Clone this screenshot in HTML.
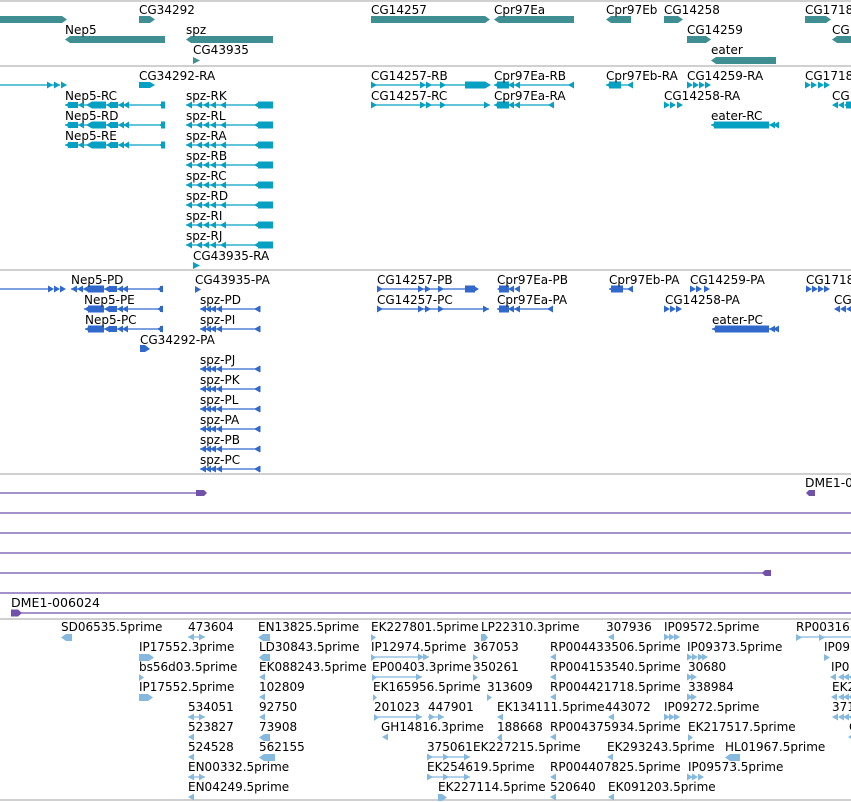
<!DOCTYPE html>
<html><head><meta charset="utf-8"><style>
html,body{margin:0;padding:0;background:#fff;width:851px;height:802px;overflow:hidden}
svg{display:block}
text{font-family:"DejaVu Sans","Liberation Sans",sans-serif;font-size:12px;fill:#000}
.d{font-family:"DejaVu Sans Condensed","DejaVu Sans",sans-serif;font-size:12px}
</style></head><body>
<svg width="851" height="802" viewBox="0 0 851 802" xmlns="http://www.w3.org/2000/svg">
<defs>
<path id="L" d="M0 0l6-3.5v7z"/>
<path id="R" d="M0 0l-6-3.5v7z"/>
</defs>
<g stroke="#c0c0c0" stroke-width="1.5">
<line x1="0" y1="1" x2="851" y2="1"/><line x1="0" y1="66" x2="851" y2="66"/>
<line x1="0" y1="270" x2="851" y2="270"/><line x1="0" y1="474" x2="851" y2="474"/>
<line x1="0" y1="619" x2="851" y2="619"/><line x1="0" y1="800" x2="851" y2="800"/>
</g>

<!-- GENES -->
<g fill="#3f8f92">
<path d="M0 16H62L67 19.5L62 23H0z"/>
<path d="M139 16H150L155 19.5L150 23H139z"/>
<path d="M165 36H70L65 39.5L70 43H165z"/>
<path d="M273 36H191L186 39.5L191 43H273z"/>
<path d="M193 57L200 60.5L193 64z"/>
<path d="M371 16H485L490 19.5L485 23H371z"/>
<path d="M574 16H499L494 19.5L499 23H574z"/>
<path d="M631 16H611L606 19.5L611 23H631z"/>
<path d="M664 16H678L683 19.5L678 23H664z"/>
<path d="M687 36H706L711 39.5L706 43H687z"/>
<path d="M776 57H716L711 60.5L716 64H776z"/>
<path d="M805 16H826L831 19.5L826 23H805z"/>
<path d="M851 36H837L832 39.5L837 43H851z"/>
</g>
<text x="139" y="14">CG34292</text><text x="65" y="34">Nep5</text><text x="186" y="34">spz</text>
<text x="193" y="54">CG43935</text><text x="371" y="14">CG14257</text><text x="494" y="14">Cpr97Ea</text>
<text x="606" y="14">Cpr97Eb</text><text x="664" y="14">CG14258</text><text x="687" y="34">CG14259</text>
<text x="711" y="54">eater</text><text x="805" y="14">CG1718</text><text x="832" y="34">CG</text>

<!-- TRANSCRIPTS -->
<g fill="#05a0c2" stroke="#05a0c2">
<g stroke-width="1.3">
<line x1="0" y1="85" x2="60" y2="85"/>
<line x1="65" y1="105" x2="165" y2="105"/><line x1="65" y1="125" x2="165" y2="125"/><line x1="65" y1="145" x2="165" y2="145"/>
<line x1="186" y1="105" x2="273" y2="105"/><line x1="186" y1="125" x2="273" y2="125"/><line x1="186" y1="145" x2="273" y2="145"/>
<line x1="186" y1="165" x2="273" y2="165"/><line x1="186" y1="185" x2="273" y2="185"/><line x1="186" y1="205" x2="273" y2="205"/>
<line x1="186" y1="225" x2="273" y2="225"/><line x1="186" y1="245" x2="273" y2="245"/>
<line x1="371" y1="85" x2="490" y2="85"/><line x1="371" y1="105" x2="490" y2="105"/>
<line x1="494" y1="85" x2="574" y2="85"/><line x1="494" y1="105" x2="554" y2="105"/>
<line x1="606" y1="85" x2="633" y2="85"/><line x1="711" y1="125" x2="777" y2="125"/>
</g>
<g stroke="none">
<use href="#R" x="53" y="85"/><use href="#R" x="60" y="85"/><use href="#R" x="67" y="85"/>
<path d="M139 82H150L155 85L150 88H139z"/>
</g>
<g stroke="none" id="nep">
<use href="#L" x="65" y="105"/><rect x="68" y="102" width="10" height="6"/><use href="#L" x="78" y="105"/><use href="#L" x="86" y="105"/>
<rect x="92" y="101.5" width="14" height="7"/><use href="#L" x="106" y="105"/><rect x="110" y="102" width="8" height="6"/><use href="#L" x="118" y="105"/><use href="#L" x="123" y="105"/>
<use href="#L" x="159" y="105"/><rect x="161" y="101.5" width="4" height="7"/>
</g>
<use href="#nep" y="20" stroke="none"/><use href="#nep" y="40" stroke="none"/>
<g stroke="none" id="spz">
<use href="#L" x="186" y="105"/><use href="#L" x="196" y="105"/><use href="#L" x="203" y="105"/><use href="#L" x="210" y="105"/><use href="#L" x="220" y="105"/>
<use href="#L" x="254" y="105"/><rect x="258" y="101.5" width="15" height="7"/>
</g>
<use href="#spz" y="20" stroke="none"/><use href="#spz" y="40" stroke="none"/><use href="#spz" y="60" stroke="none"/>
<use href="#spz" y="80" stroke="none"/><use href="#spz" y="100" stroke="none"/><use href="#spz" y="120" stroke="none"/><use href="#spz" y="140" stroke="none"/>
<path stroke="none" d="M193 262L200 265.5L193 269z"/>
<g stroke="none">
<use href="#R" x="377" y="85"/><use href="#R" x="426" y="85"/><use href="#R" x="432" y="85"/><use href="#R" x="446" y="85"/>
<rect x="465" y="81.5" width="20" height="7"/><use href="#R" x="491" y="85"/>
<use href="#R" x="377" y="105"/><use href="#R" x="426" y="105"/><use href="#R" x="432" y="105"/><use href="#R" x="446" y="105"/><use href="#R" x="490" y="105"/>
<rect x="497" y="81.5" width="12" height="7"/><use href="#L" x="494" y="85"/><use href="#L" x="508" y="85"/><use href="#L" x="514" y="85"/><use href="#L" x="568" y="85"/>
<rect x="497" y="101.5" width="12" height="7"/><use href="#L" x="494" y="105"/><use href="#L" x="508" y="105"/><use href="#L" x="514" y="105"/><use href="#L" x="548" y="105"/>
<rect x="609" y="81.5" width="12" height="7"/><use href="#L" x="606" y="85"/><use href="#L" x="627" y="85"/>
<use href="#R" x="693" y="85"/><use href="#R" x="699" y="85"/><use href="#R" x="705" y="85"/><use href="#R" x="711" y="85"/>
<use href="#R" x="670" y="105"/><use href="#R" x="676" y="105"/><use href="#R" x="683" y="105"/>
<rect x="714" y="121.5" width="55" height="7"/><use href="#L" x="711" y="125"/><use href="#L" x="769" y="125"/><use href="#L" x="773" y="125"/>
<use href="#R" x="811" y="85"/><use href="#R" x="817" y="85"/><use href="#R" x="824" y="85"/><use href="#R" x="830" y="85"/>
<use href="#L" x="832" y="105"/><use href="#L" x="838" y="105"/><use href="#L" x="844" y="105"/><rect x="846" y="101.5" width="5" height="7"/>
</g>
</g>
<text x="139" y="80">CG34292-RA</text><text x="65" y="100">Nep5-RC</text><text x="65" y="120">Nep5-RD</text><text x="65" y="140">Nep5-RE</text>
<text x="186" y="100">spz-RK</text><text x="186" y="120">spz-RL</text><text x="186" y="140">spz-RA</text><text x="186" y="160">spz-RB</text>
<text x="186" y="180">spz-RC</text><text x="186" y="200">spz-RD</text><text x="186" y="220">spz-RI</text><text x="186" y="240">spz-RJ</text>
<text x="193" y="260">CG43935-RA</text>
<text x="371" y="80">CG14257-RB</text><text x="371" y="100">CG14257-RC</text><text x="494" y="80">Cpr97Ea-RB</text><text x="494" y="100">Cpr97Ea-RA</text>
<text x="606" y="80">Cpr97Eb-RA</text><text x="687" y="80">CG14259-RA</text><text x="664" y="100">CG14258-RA</text><text x="711" y="120">eater-RC</text>
<text x="805" y="80">CG1718</text><text x="832" y="100">CG</text>

<!-- PROTEINS -->
<g fill="#3068cc" stroke="#3068cc">
<g stroke-width="1.3">
<line x1="0" y1="289" x2="48" y2="289"/>
<line x1="71" y1="289" x2="162" y2="289"/><line x1="84" y1="309" x2="162" y2="309"/><line x1="85" y1="329" x2="162" y2="329"/>
<line x1="200" y1="309" x2="260" y2="309"/><line x1="200" y1="329" x2="260" y2="329"/><line x1="200" y1="369" x2="260" y2="369"/>
<line x1="200" y1="389" x2="260" y2="389"/><line x1="200" y1="409" x2="260" y2="409"/><line x1="200" y1="429" x2="260" y2="429"/>
<line x1="200" y1="449" x2="260" y2="449"/><line x1="200" y1="469" x2="260" y2="469"/>
<line x1="377" y1="289" x2="470" y2="289"/><line x1="377" y1="309" x2="489" y2="309"/>
<line x1="497" y1="309" x2="553" y2="309"/><line x1="609" y1="289" x2="633" y2="289"/><line x1="712" y1="329" x2="777" y2="329"/>
</g>
<g stroke="none">
<use href="#R" x="54" y="289"/><use href="#R" x="60" y="289"/><use href="#R" x="66" y="289"/>
<use href="#L" x="71" y="289"/><use href="#L" x="77" y="289"/><use href="#L" x="83" y="289"/><rect x="88" y="285.5" width="16" height="7"/><use href="#L" x="104" y="289"/><rect x="109" y="286" width="8" height="6"/><use href="#L" x="117" y="289"/><use href="#L" x="122" y="289"/><use href="#L" x="157" y="289"/><rect x="160" y="286" width="2" height="6"/>
<use href="#L" x="84" y="309"/><rect x="88" y="305.5" width="16" height="7"/><use href="#L" x="104" y="309"/><rect x="109" y="306" width="8" height="6"/><use href="#L" x="117" y="309"/><use href="#L" x="122" y="309"/><use href="#L" x="157" y="309"/><rect x="160" y="306" width="2" height="6"/>
<use href="#L" x="85" y="329"/><rect x="88" y="325.5" width="16" height="7"/><use href="#L" x="104" y="329"/><rect x="109" y="326" width="8" height="6"/><use href="#L" x="117" y="329"/><use href="#L" x="122" y="329"/><use href="#L" x="157" y="329"/><rect x="160" y="326" width="2" height="6"/>
<path d="M195 286L201 289.5L195 293z"/>
<path d="M140 345H145L150 349L145 352H140z"/>
</g>
<g stroke="none" id="pp">
<use href="#L" x="200" y="309"/><use href="#L" x="205" y="309"/><use href="#L" x="210" y="309"/><use href="#L" x="216" y="309"/><use href="#L" x="254" y="309"/><rect x="259" y="306" width="1.5" height="6"/>
</g>
<use href="#pp" y="20" stroke="none"/><use href="#pp" y="60" stroke="none"/><use href="#pp" y="80" stroke="none"/><use href="#pp" y="100" stroke="none"/>
<use href="#pp" y="120" stroke="none"/><use href="#pp" y="140" stroke="none"/><use href="#pp" y="160" stroke="none"/>
<g stroke="none">
<use href="#R" x="383" y="289"/><use href="#R" x="424" y="289"/><use href="#R" x="431" y="289"/><use href="#R" x="444" y="289"/>
<rect x="465" y="285.5" width="10" height="7"/><use href="#R" x="479" y="289"/>
<use href="#R" x="383" y="309"/><use href="#R" x="424" y="309"/><use href="#R" x="431" y="309"/><use href="#R" x="444" y="309"/><use href="#R" x="489" y="309"/>
<rect x="499" y="285.5" width="10" height="7"/><use href="#L" x="497" y="289"/><use href="#L" x="508" y="289"/><use href="#L" x="514" y="289"/>
<rect x="499" y="305.5" width="10" height="7"/><use href="#L" x="497" y="309"/><use href="#L" x="508" y="309"/><use href="#L" x="514" y="309"/><use href="#L" x="547" y="309"/>
<rect x="611" y="285.5" width="12" height="7"/><use href="#L" x="609" y="289"/><use href="#L" x="627" y="289"/>
<use href="#R" x="696" y="289"/><use href="#R" x="702" y="289"/><use href="#R" x="710" y="289"/>
<use href="#R" x="670" y="309"/><use href="#R" x="676" y="309"/><use href="#R" x="682" y="309"/>
<rect x="715" y="325.5" width="54" height="7"/><use href="#L" x="712" y="329"/><use href="#L" x="769" y="329"/><use href="#L" x="773" y="329"/>
<use href="#R" x="812" y="289"/><use href="#R" x="818" y="289"/><use href="#R" x="824" y="289"/><use href="#R" x="830" y="289"/>
<use href="#L" x="834" y="309"/><use href="#L" x="840" y="309"/><use href="#L" x="846" y="309"/>
</g>
</g>
<text x="71" y="284">Nep5-PD</text><text x="84" y="304">Nep5-PE</text><text x="85" y="324">Nep5-PC</text><text x="140" y="344">CG34292-PA</text>
<text x="195" y="284">CG43935-PA</text><text x="200" y="304">spz-PD</text><text x="200" y="324">spz-PI</text>
<text x="200" y="364">spz-PJ</text><text x="200" y="384">spz-PK</text><text x="200" y="404">spz-PL</text><text x="200" y="424">spz-PA</text>
<text x="200" y="444">spz-PB</text><text x="200" y="464">spz-PC</text>
<text x="377" y="284">CG14257-PB</text><text x="377" y="304">CG14257-PC</text><text x="497" y="284">Cpr97Ea-PB</text><text x="497" y="304">Cpr97Ea-PA</text>
<text x="609" y="284">Cpr97Eb-PA</text><text x="690" y="284">CG14259-PA</text><text x="665" y="304">CG14258-PA</text><text x="712" y="324">eater-PC</text>
<text x="806" y="284">CG1718</text><text x="834" y="304">CG</text>

<!-- DME -->
<g fill="#7052aa" stroke="#7052aa" stroke-width="1.3">
<line x1="0" y1="493" x2="200" y2="493"/><path stroke="none" d="M196 490H204L207 493L204 496H196z"/>
<path stroke="none" d="M815 490H809L806 493L809 496H815z"/>
<line x1="0" y1="513" x2="851" y2="513"/><line x1="0" y1="533" x2="851" y2="533"/><line x1="0" y1="553" x2="851" y2="553"/>
<line x1="0" y1="573" x2="765" y2="573"/><path stroke="none" d="M771 570H765L762 573L765 576H771z"/>
<line x1="0" y1="593" x2="851" y2="593"/>
<line x1="15" y1="613" x2="851" y2="613"/><path stroke="none" d="M11 609.5H18L22 613L18 616.5H11z"/>
</g>
<text class="d" x="805" y="487" textLength="48" lengthAdjust="spacingAndGlyphs">DME1-0</text><text class="d" x="11" y="607" textLength="89" lengthAdjust="spacingAndGlyphs">DME1-006024</text>

<!-- ESTs -->
<g fill="#86b9de" stroke="#86b9de" stroke-width="1.3">
<g stroke="none">
<path d="M72 634H66L61 637.5L66 641H72z"/>
<path d="M270 634H263L258 637.5L263 641H270z"/>
<path d="M371 634V641L376 637.5z"/><path d="M481 634H485L488 637.5L485 641H481z"/>
<use href="#L" x="608" y="637"/>
<use href="#R" x="670" y="637"/><use href="#R" x="675" y="637"/><use href="#R" x="680" y="637"/>
<path d="M139 654H149L154 657.5L149 661H139z"/>
<path d="M270 654H263L259 657.5L263 661H270z"/>
<path d="M473 654V661L478 657.5z"/><use href="#L" x="550" y="657"/>
<use href="#R" x="693" y="657"/><use href="#R" x="698" y="657"/><use href="#R" x="704" y="657"/><use href="#R" x="708" y="657"/>
<path d="M824 654V661L830 657.5z"/>
<path d="M139 674V681L144 677.5z"/><use href="#L" x="259" y="677"/>
<path d="M473 674V681L478 677.5z"/><use href="#L" x="550" y="677"/>
<use href="#R" x="693" y="677"/><use href="#R" x="697" y="677"/>
<use href="#L" x="830" y="677"/><use href="#L" x="838" y="677"/><use href="#L" x="843" y="677"/><use href="#L" x="848" y="677"/>
<path d="M139 694H148L153 697.5L148 701H139z"/><use href="#L" x="259" y="697"/>
<path d="M373 694V701L377 697.5z"/><path d="M487 694V701L492 697.5z"/><use href="#L" x="550" y="697"/>
<use href="#R" x="693" y="697"/><use href="#R" x="697" y="697"/>
<use href="#L" x="831" y="697"/><use href="#L" x="838" y="697"/><use href="#L" x="843" y="697"/><use href="#L" x="848" y="697"/>
<use href="#L" x="259" y="717"/><use href="#L" x="497" y="717"/><use href="#L" x="608" y="717"/>
<use href="#R" x="670" y="717"/><use href="#R" x="675" y="717"/><use href="#R" x="680" y="717"/>
<use href="#L" x="832" y="717"/><use href="#L" x="838" y="717"/><use href="#L" x="843" y="717"/><use href="#L" x="848" y="717"/>
<use href="#L" x="188" y="737"/><path d="M270 734H264L259 737.5L264 741H270z"/><use href="#L" x="382" y="737"/>
<path d="M502 734H501L497 737.5L501 741H502z"/><use href="#L" x="550" y="737"/><path d="M688 734V741L693 737.5z"/>
<use href="#L" x="848" y="737"/>
<use href="#L" x="188" y="757"/><path d="M275 754H264L259 757.5L264 761H275z"/><use href="#L" x="607" y="757"/>
<path d="M740 754H730L725 757.5L730 761H740z"/>
<use href="#L" x="550" y="777"/>
<use href="#R" x="693" y="777"/><use href="#R" x="698" y="777"/><use href="#R" x="704" y="777"/>
<use href="#L" x="188" y="797"/><path d="M438 794H442L447 797.5L442 801H438z"/><use href="#L" x="550" y="797"/><use href="#L" x="608" y="797"/>
</g>
<line x1="188" y1="637" x2="205" y2="637"/><use href="#L" x="188" y="637" stroke="none"/><use href="#R" x="205" y="637" stroke="none"/>
<line x1="796" y1="637" x2="851" y2="637"/><path stroke="none" d="M796 634V641L802 637.5z"/><path stroke="none" d="M819 634V641L825 637.5z"/>
<line x1="371" y1="657" x2="429" y2="657"/><path stroke="none" d="M371 654V661L376 657.5z"/><use href="#R" x="424" y="657" stroke="none"/><use href="#R" x="429" y="657" stroke="none"/>
<line x1="372" y1="677" x2="422" y2="677"/><path stroke="none" d="M372 674V681L377 677.5z"/><use href="#R" x="422" y="677" stroke="none"/>
<line x1="188" y1="717" x2="205" y2="717"/><use href="#L" x="188" y="717" stroke="none"/><use href="#R" x="205" y="717" stroke="none"/>
<line x1="374" y1="717" x2="422" y2="717"/><path stroke="none" d="M374 714V721L379 717.5z"/><use href="#R" x="422" y="717" stroke="none"/>
<line x1="428" y1="717" x2="444" y2="717"/><use href="#R" x="435" y="717" stroke="none"/><use href="#R" x="444" y="717" stroke="none"/>
<line x1="427" y1="757" x2="470" y2="757"/><use href="#R" x="433" y="757" stroke="none"/><use href="#R" x="449" y="757" stroke="none"/><use href="#R" x="470" y="757" stroke="none"/>
<line x1="188" y1="777" x2="205" y2="777"/><use href="#L" x="188" y="777" stroke="none"/><use href="#R" x="205" y="777" stroke="none"/>
<line x1="427" y1="777" x2="470" y2="777"/><use href="#R" x="433" y="777" stroke="none"/><use href="#R" x="449" y="777" stroke="none"/><use href="#R" x="470" y="777" stroke="none"/>
</g>
<text x="61" y="631">SD06535.5prime</text><text x="188" y="631">473604</text><text x="258" y="631">EN13825.5prime</text>
<text x="371" y="631">EK227801.5prime</text><text x="481" y="631">LP22310.3prime</text><text x="606" y="631">307936</text>
<text x="664" y="631">IP09572.5prime</text><text x="796" y="631">RP00316</text>
<text x="139" y="651">IP17552.3prime</text><text x="259" y="651">LD30843.5prime</text><text x="371" y="651">IP12974.5prime</text>
<text x="473" y="651">367053</text><text x="550" y="651">RP004433506.5prime</text><text x="687" y="651">IP09373.5prime</text><text x="824" y="651">IP09</text>
<text x="139" y="671">bs56d03.5prime</text><text x="259" y="671">EK088243.5prime</text><text x="372" y="671">EP00403.3prime</text>
<text x="473" y="671">350261</text><text x="550" y="671">RP004153540.5prime</text><text x="688" y="671">30680</text><text x="831" y="671">IP0</text>
<text x="139" y="691">IP17552.5prime</text><text x="259" y="691">102809</text><text x="373" y="691">EK165956.5prime</text>
<text x="487" y="691">313609</text><text x="550" y="691">RP004421718.5prime</text><text x="688" y="691">338984</text><text x="832" y="691">EK2</text>
<text x="188" y="711">534051</text><text x="259" y="711">92750</text><text x="374" y="711">201023</text><text x="428" y="711">447901</text>
<text x="497" y="711">EK134111.5prime</text><text x="605" y="711">443072</text><text x="664" y="711">IP09272.5prime</text><text x="832" y="711">371</text>
<text x="188" y="731">523827</text><text x="259" y="731">73908</text><text x="381" y="731">GH14816.3prime</text><text x="497" y="731">188668</text>
<text x="550" y="731">RP004375934.5prime</text><text x="688" y="731">EK217517.5prime</text><text x="849" y="731">C</text>
<text x="188" y="751">524528</text><text x="259" y="751">562155</text><text x="427" y="751">375061</text><text x="473" y="751">EK227215.5prime</text>
<text x="607" y="751">EK293243.5prime</text><text x="725" y="751">HL01967.5prime</text>
<text x="188" y="771">EN00332.5prime</text><text x="427" y="771">EK254619.5prime</text><text x="550" y="771">RP004407825.5prime</text><text x="688" y="771">IP09573.5prime</text>
<text x="188" y="791">EN04249.5prime</text><text x="438" y="791">EK227114.5prime</text><text x="550" y="791">520640</text><text x="608" y="791">EK091203.5prime</text>
</svg>
</body></html>
